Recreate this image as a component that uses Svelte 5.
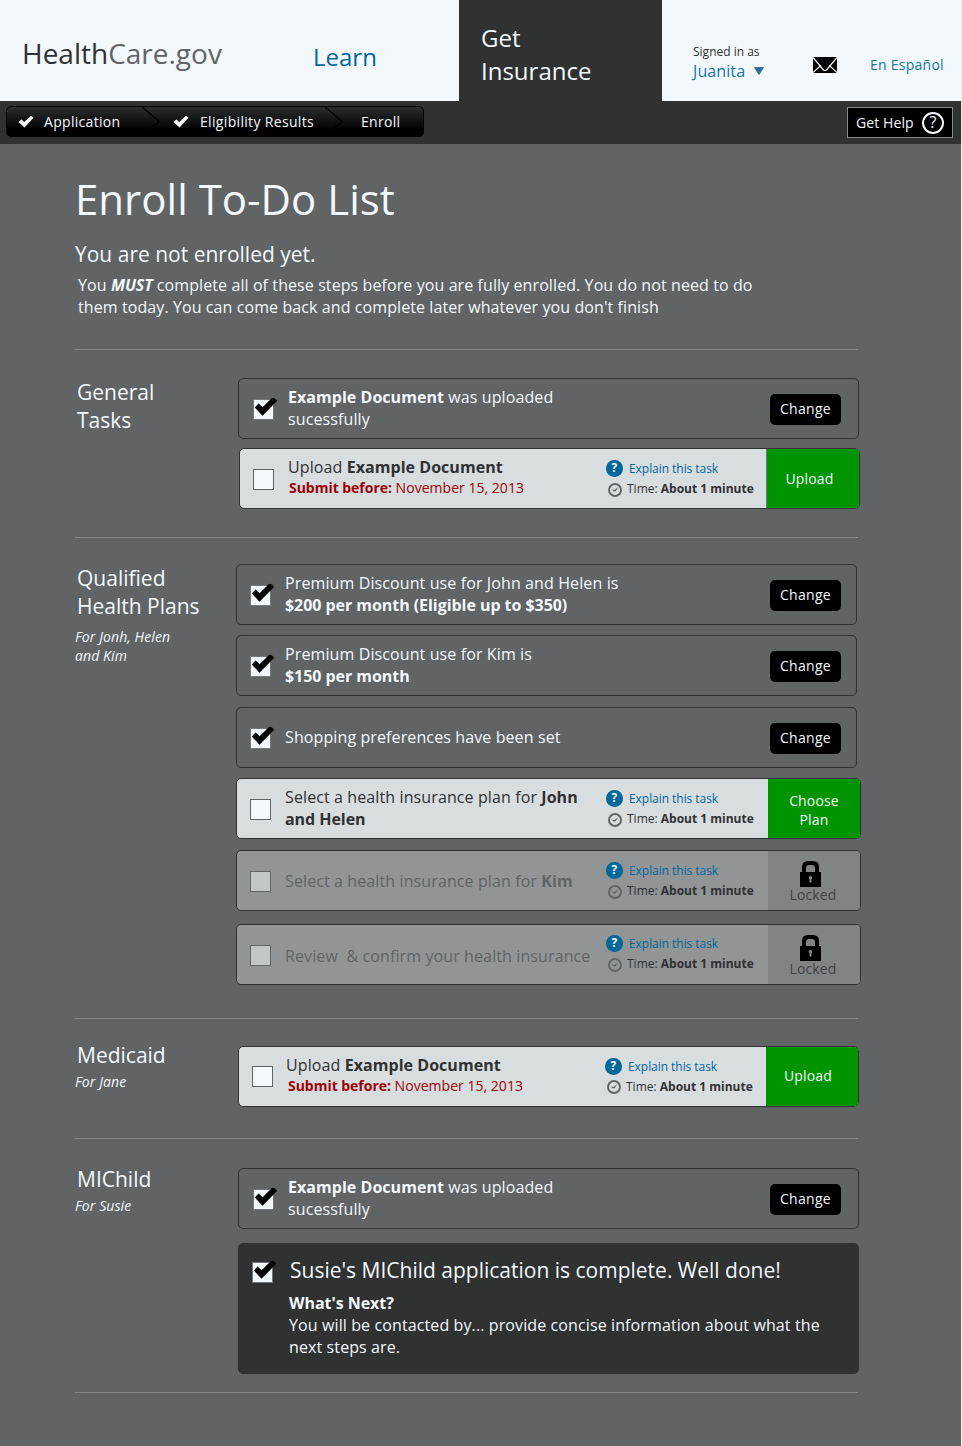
<script>
  const sections = [
    {
      id: 'general', title: ['General', 'Tasks'], note: [],
      rows: [
        { kind: 'done', lines: [[['Example Document', 1], [' was uploaded', 0]], [['sucessfully', 0]]] },
        { kind: 'open', action: ['Upload'], lines: [[['Upload ', 0], ['Example Document', 1]]], due: 'November 15, 2013' }
      ]
    },
    {
      id: 'qualified', title: ['Qualified', 'Health Plans'], note: ['For Jonh, Helen', 'and Kim'],
      rows: [
        { kind: 'done', lines: [[['Premium Discount use for John and Helen is', 0]], [['$200 per month (Eligible up to $350)', 1]]] },
        { kind: 'done', lines: [[['Premium Discount use for Kim is', 0]], [['$150 per month', 1]]] },
        { kind: 'done', lines: [[['Shopping preferences have been set', 0]]] },
        { kind: 'open', action: ['Choose', 'Plan'], lines: [[['Select a health insurance plan for ', 0], ['John', 1]], [['and Helen', 1]]] },
        { kind: 'locked', lines: [[['Select a health insurance plan for ', 0], ['Kim', 1]]] },
        { kind: 'locked', lines: [[['Review\u00a0 & confirm your health insurance', 0]]] }
      ]
    },
    {
      id: 'medicaid', title: ['Medicaid'], note: ['For Jane'],
      rows: [
        { kind: 'open', action: ['Upload'], lines: [[['Upload ', 0], ['Example Document', 1]]], due: 'November 15, 2013' }
      ]
    },
    {
      id: 'michild', title: ['MIChild'], note: ['For Susie'],
      rows: [
        { kind: 'done', lines: [[['Example Document', 1], [' was uploaded', 0]], [['sucessfully', 0]]] },
        { kind: 'complete' }
      ]
    }
  ];
</script>

{#snippet checkbox(checked)}
  <span class="box" class:checked>
    {#if checked}
      <svg class="tick" width="24" height="20" viewBox="0 0 24 20"><path d="M.8 10.500 L4.600 6.600 L8.600 10.200 L17.600 1.300 Q20 -.3 23.200 3.800 L8.500 18.800 Z" fill="#000" /></svg>
    {/if}
  </span>
{/snippet}

{#snippet crumbTick()}
  <svg class="crumb-tick" width="16" height="13" viewBox="0 0 16 13"><path d="M.5 7 L3.500 4.500 L6.300 7 L13 .7 L15.500 2.800 L6.500 12.500 Z" fill="#fff" /></svg>
{/snippet}

<div class="page">
  <header>
    <div class="logo"><span>Health</span>Care.gov</div>
    <a class="learn" href="#learn">Learn</a>
    <a class="insurance" href="#insurance">Get<br />Insurance</a>
    <div class="account">
      <div class="user">
        <div class="signed">Signed in as</div>
        <div class="name">Juanita
          <svg width="10" height="8" viewBox="0 0 10 8"><path d="M.5 .5H9.500L5 7.500Z" fill="#1277ab" stroke="#4a5a66" stroke-width=".8" /></svg>
        </div>
      </div>
      <svg class="mail" width="24" height="16" viewBox="0 0 24 16"><rect width="24" height="16" fill="#000" /><path d="M0 .5 L10.500 13 Q12 14 13.500 13 L24 .5 M0 15.500 L8 8.200 M24 15.500 L16 8.200" fill="none" stroke="#f3f8fc" stroke-width="1.200" /></svg>
      <a class="lang" href="#es">En Español</a>
    </div>
  </header>

  <nav>
    <div class="crumbs">
      {@render crumbTick()}
      <span class="c1">Application</span>
      <svg class="sep" width="18" height="29" viewBox="0 0 18 29"><path d="M0 0 L17.300 14.500 L0 29" fill="none" stroke="#000" stroke-width="1.300" /></svg>
      {@render crumbTick()}
      <span class="c2">Eligibility Results</span>
      <svg class="sep" width="18" height="29" viewBox="0 0 18 29"><path d="M0 0 L17.300 14.500 L0 29" fill="none" stroke="#000" stroke-width="1.300" /></svg>
      <span class="c3">Enroll</span>
    </div>
    <button class="help"><span>Get Help</span><i>?</i></button>
  </nav>

  <main>
    <div class="intro">
      <h1>Enroll To-Do List</h1>
      <h2>You are not enrolled yet.</h2>
      <p>You <b><em>MUST</em></b> complete all of these steps before you are fully enrolled. You do not need to do<br />them today. You can come back and complete later whatever you don't finish</p>
    </div>

    {#each sections as s}
      <section class={s.id}>
        <div class="label">
          <h3>{#each s.title as t}<span>{t}</span>{/each}</h3>
          {#if s.note.length}<div class="note">{#each s.note as t}<span>{t}</span>{/each}</div>{/if}
        </div>
        <div class="rows">
          {#each s.rows as r}
            <div class="row {r.kind}">
              {#if r.kind === 'complete'}
                {@render checkbox(true)}
                <div class="message">
                  <h4>Susie's MIChild application is complete. Well done!</h4>
                  <b>What's Next?</b>
                  <p>You will be contacted by... provide concise information about what the<br />next steps are.</p>
                </div>
              {:else}
                {@render checkbox(r.kind === 'done')}
                <div class="text" class:dated={r.due}>
                  {#each r.lines as line}
                    <div>{#each line as [t, bold]}{#if bold}<b>{t}</b>{:else}<span>{t}</span>{/if}{/each}</div>
                  {/each}
                  {#if r.due}<div class="due"><b>Submit before:</b> {r.due}</div>{/if}
                </div>
                {#if r.kind === 'done'}
                  <button class="change">Change</button>
                {:else}
                  <div class="meta">
                    <div class="explain">
                      <i>?</i><a href="#explain">Explain this task</a>
                    </div>
                    <div class="time">
                      <svg width="14" height="14" viewBox="0 0 14 14"><circle cx="7" cy="7" r="6" fill="none" stroke="currentColor" stroke-width="1.900" /><path d="M3.600 6.400 L6.300 7 L10.400 4.300 L7.600 8.300 L5.800 8.500 Z" fill="currentColor" /></svg>
                      <span>Time: <b>About 1 minute</b></span>
                    </div>
                  </div>
                  <button class="action">
                    {#if r.kind === 'locked'}
                      <svg width="21" height="26" viewBox="0 0 21 26"><path d="M0 11H2V6Q2 0 8 0H13Q19 0 19 6V11H21V26H0Z M6 11H15V7Q15 4 12 4H9Q6 4 6 7Z" fill="#000" fill-rule="evenodd" /><path d="M10.500 15a1.800 1.800 0 0 1 1 3.200V21.500h-2V18.200a1.800 1.800 0 0 1 1-3.200" fill="#85898a" /></svg>
                      <span>Locked</span>
                    {:else}
                      {#each r.action as t}<span>{t}</span>{/each}
                    {/if}
                  </button>
                {/if}
              {/if}
            </div>
          {/each}
        </div>
      </section>
    {/each}
  </main>
</div>

<style>
  :global(body) { background: #606465; }
  .page {
    width: 962px; height: 1446px; box-sizing: border-box; border-right: 1px solid #edf1f4;
    background: #606465; color: #f3f8fc; font: 16px/22px "Open Sans", sans-serif; overflow: hidden;
  }
  .page :global(*) { box-sizing: border-box; }
  a { text-decoration: none; color: #00679b; }
  h1, h2, h3, h4, p { margin: 0; font-weight: 400; }
  button { border: 0; margin: 0; padding: 0; font: inherit; color: inherit; }
  svg { display: block; flex: none; }
  span { white-space: pre; }

  header { display: flex; height: 101px; background: #f3f8fc; }
  .logo { width: 313px; padding: 34px 0 0 22px; font-size: 28px; line-height: 38px; color: #606465; }
  .logo span { color: #303131; }
  .learn { width: 146px; padding-top: 40px; font-size: 24px; line-height: 33px; }
  .insurance { width: 203px; padding: 21px 0 0 22px; background: #303131; color: #f3f8fc; font-size: 24px; line-height: 33px; }
  .account { flex: 1; display: flex; color: #303131; }
  .user { width: 151px; padding: 43px 0 0 31px; }
  .signed { font-size: 12px; line-height: 17px; }
  .name { display: flex; gap: 9px; align-items: center; color: #1277ab; line-height: 22px; letter-spacing: .1px; }
  .mail { margin-top: 57px; }
  .lang { padding: 55px 0 0 33px; font-size: 14px; line-height: 20px; letter-spacing: .25px; color: #1277ab; white-space: nowrap; }

  nav { display: flex; justify-content: space-between; height: 43px; padding: 5px 8px 0 6px; background: #303131; }
  .crumbs {
    display: flex; align-items: center; width: 418px; height: 31px; padding-left: 11px;
    border: 1px solid #000; border-radius: 5px; background: linear-gradient(#2c2d2d, #000 80%);
    font-size: 14px; line-height: 20px; letter-spacing: .3px;
  }
  .c1 { width: 98px; margin-left: 10px; }
  .c2 { width: 125px; margin-left: 11px; letter-spacing: .33px; }
  .c3 { margin-left: 5px; }
  .sep { margin-right: 13px; }
  .help {
    display: flex; align-items: center; width: 106px; height: 31px; margin-top: 1px; padding-left: 8px;
    border: 1px solid #85898a; background: #000; font-size: 14px;
  }
  .help span { width: 66px; text-align: left; letter-spacing: .1px; }
  .help i {
    width: 22px; height: 22px; border: 2px solid #f3f8fc; border-radius: 50%;
    font-style: normal; font-size: 16px; line-height: 17px; text-align: center;
  }

  main { width: 783px; margin-left: 75px; }
  .intro { height: 205px; padding-top: 26px; }
  h1 { font-size: 42px; line-height: 57px; }
  h2 { margin: 13px 0 6px 0; font-size: 21px; line-height: 28px; }
  .intro p { padding-left: 3px; letter-spacing: .09px; white-space: nowrap; }
  .intro p b { letter-spacing: -.1px; }

  section { display: flex; border-top: 1px solid #85898a; }
  .general { height: 188px; }
  .qualified { height: 481px; }
  .medicaid { height: 120px; }
  .michild { height: 255px; border-bottom: 1px solid #85898a; }
  .label { width: 163px; padding-top: 28px; flex: none; }
  .qualified .label { width: 161px; padding-top: 26px; }
  .medicaid .label { padding-top: 22px; }
  .michild .label { padding-top: 26px; }
  h3 { padding-left: 2px; font-size: 21px; line-height: 28px; }
  h3 span, .note span { display: block; }
  .note { margin: 3px 0 0 0; font-size: 14px; line-height: 19px; font-style: italic; letter-spacing: .1px; }
  .qualified .note { margin-top: 7px; }

  .rows { display: flex; flex-direction: column; flex: none; padding-top: 28px; }
  .general .rows { gap: 9px; }
  .qualified .rows { padding-top: 26px; }
  .medicaid .rows { padding-top: 27px; }
  .michild .rows { padding-top: 29px; gap: 14px; }
  .row { display: flex; align-items: center; width: 621px; height: 61px; padding-left: 14px; border: 1px solid #303131; border-radius: 5px; }
  .general .open { margin-left: 1px; padding-left: 13px; }
  .qualified .row { padding-left: 13px; margin-bottom: 10px; }
  .qualified .row:nth-child(2), .qualified .row:nth-child(4) { margin-bottom: 11px; }
  .qualified .row:nth-child(5) { margin-bottom: 13px; }
  .qualified .open, .qualified .locked { width: 625px; }
  .medicaid .row { padding-left: 13px; }
  .box { width: 21px; height: 21px; border: 1px solid #606465; background: #f3f8fc; flex: none; margin-top: 1px; }
  .medicaid .box { margin-top: -1px; }
  .box.checked { border-color: #73797b; }
  .tick { margin: -3px 0 0 0; }
  .text { flex: 1; margin: -2px 0 0 14px; white-space: nowrap; }
  .text span { letter-spacing: .11px; }
  .text b { letter-spacing: .04px; }
  .qualified .text b { letter-spacing: -.05px; }
  .qualified .text span + b { letter-spacing: .04px; }
  .medicaid .text { margin-left: 13px; }
  .locked .text { margin-top: 0; }
  .row:nth-child(6) .text { margin-top: 2px; }
  .due { margin-left: 1px; font-size: 14px; line-height: 19px; letter-spacing: .03px; color: #a10003; }
  .text .due b { letter-spacing: -.03px; }
  .medicaid .due { margin-left: 2px; }
  .text.dated { margin-top: -5px; }
  .change { width: 71px; height: 31px; margin: 1px 17px 0 0; border-radius: 5px; background: #000; font-size: 14px; letter-spacing: .3px; }
  .qualified .change { margin-right: 15px; }
  .open { background: #d8dde0; color: #303131; }
  .locked { background: #919596; color: #606465; }
  .locked .box { background: #c1c6c9; }
  .meta { width: 160px; flex: none; font-size: 12px; line-height: 20px; color: #303131; white-space: nowrap; }
  .qualified .meta { width: 162px; }
  .medicaid .meta { width: 161px; }
  .row:nth-child(6) .meta { margin-top: -2px; }
  .explain { display: flex; align-items: center; gap: 6.5px; }
  .explain a { letter-spacing: -.05px; }
  .explain i {
    width: 16.5px; height: 16.5px; border-radius: 50%; background: #00679b; color: #f3f8fc;
    font: bold 12px/16px "Open Sans", sans-serif; text-align: center;
  }
  .time { display: flex; align-items: center; gap: 5px; padding-left: 2px; }
  .time svg { color: #606465; margin-top: 2px; }
  .medicaid .time svg { margin-top: 0; }
  .action {
    display: flex; flex-direction: column; align-items: center; justify-content: center; align-self: stretch;
    width: 92px; flex: none; padding-right: 8px; border-radius: 0 4px 4px 0;
    background: #009500; color: #f3f8fc; font-size: 14px; line-height: 19px; letter-spacing: .15px;
  }
  .general .action { width: 93px; padding-right: 7px; border-left: 1px solid #73797b; }
  .medicaid .action { padding-bottom: 2px; }
  .qualified .open .action { padding-right: 0; padding-top: 3px; }
  .qualified .locked .action { padding: 3px 7px 0 0; background: #808485; color: #404344; }
  .locked .action span { margin: -2px -5px 0 0; }

  .complete { align-items: flex-start; height: 131px; padding: 17px 0 0 13px; background: #303131; border-color: #303131; }
  .message { margin-left: 16px; }
  .message h4 { margin: -5px 0 8px 1px; font-size: 21px; line-height: 28px; }
  .message b { display: block; letter-spacing: -.04px; }
  .message p { letter-spacing: .11px; white-space: nowrap; }
</style>
